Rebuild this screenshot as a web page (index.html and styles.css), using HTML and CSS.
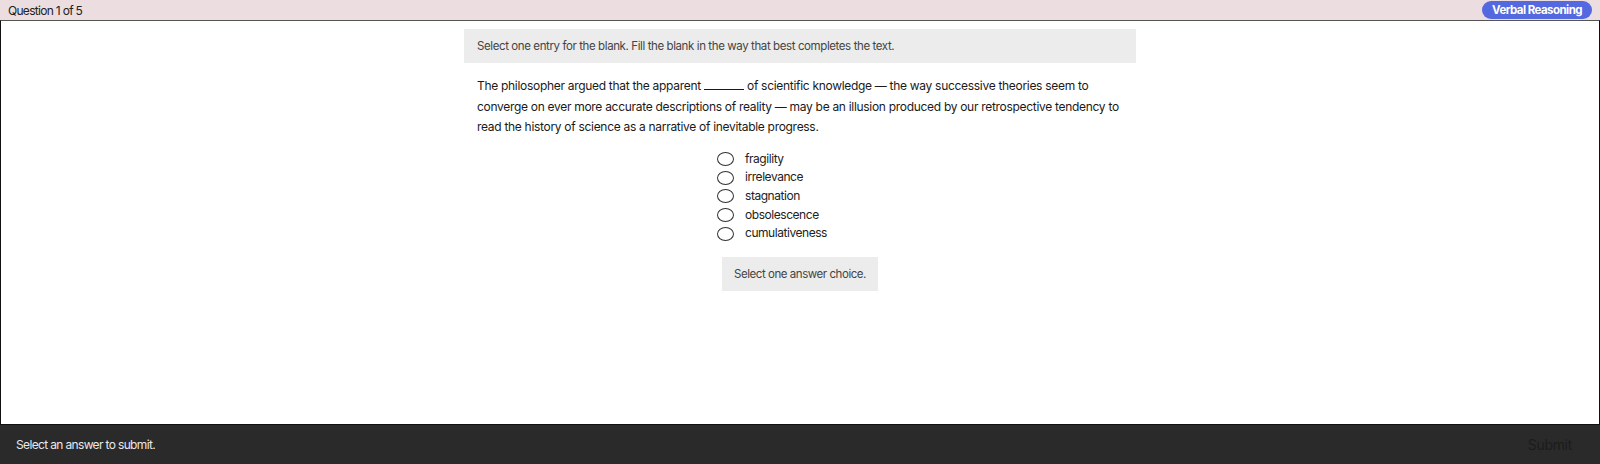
FILE: index.html
```html
<!DOCTYPE html>
<html lang="en">
<head>
  <meta charset="UTF-8">
  <meta name="viewport" content="width=device-width, initial-scale=1.0">
  <title>Question 1 of 5</title>
  <link rel="stylesheet" href="styles.css">
</head>
<body>

  <div class="top-bar">
    <span class="progress">Question 1 of 5</span>
    <span class="badge">Verbal Reasoning</span>
  </div>

  <div class="main">
    <div class="question">
      <div class="instructions">Select one entry for the blank. Fill the blank in the way that best completes the text.</div>

      <p class="passage">The philosopher argued that the apparent <span class="blank"></span> of scientific knowledge — the way successive theories seem to converge on ever more accurate descriptions of reality — may be an illusion produced by our retrospective tendency to read the history of science as a narrative of inevitable progress.</p>

      <!-- 답안 선택지 -->
      <ul class="choices">
        <li class="choice"><span class="radio"></span>fragility</li>
        <li class="choice"><span class="radio"></span>irrelevance</li>
        <li class="choice"><span class="radio"></span>stagnation</li>
        <li class="choice"><span class="radio"></span>obsolescence</li>
        <li class="choice"><span class="radio"></span>cumulativeness</li>
      </ul>

      <div class="hint">Select one answer choice.</div>
    </div>
  </div>

  <div class="footer">
    <span class="status">Select an answer to submit.</span>
    <button class="submit" disabled>Submit</button>
  </div>

</body>
</html>
```

FILE: styles.css
```css
html, body {
  height: 100%;
}

body {
  margin: 0;
  font-family: Inter, "Noto Sans", Arial, sans-serif;
  color: #1f1f1f;
  display: flex;
  flex-direction: column;
  overflow: hidden;
}

/* 상단 바 */
.top-bar {
  height: 20px;
  flex-shrink: 0;
  background-color: #ecdde0;
  display: flex;
  align-items: center;
  justify-content: space-between;
  padding: 0 8px;
  font-size: 12px;
}

.progress {
  color: #222;
  letter-spacing: -0.7px;
}

.badge {
  background-color: #5468e0;
  color: #fff;
  font-weight: 700;
  font-size: 11.5px;
  letter-spacing: -0.55px;
  padding: 2px 10px;
  border-radius: 10px;
  line-height: 14px;
}

/* 문제 영역 */
.main {
  flex: 1;
  border: 1px solid #111;
  border-top: 1px solid #555;
  background: #fff;
}

.question {
  max-width: 672px;
  margin: 8px auto 0;
}

.instructions {
  background-color: #ececec;
  color: #444;
  font-size: 11.5px;
  letter-spacing: -0.4px;
  line-height: 14px;
  padding: 10px 13px;
}

.passage {
  margin: 13px 0 0;
  padding: 0 13px;
  font-size: 12px;
  letter-spacing: -0.3px;
  line-height: 20.5px;
  color: #1a1a1a;
}

.blank {
  display: inline-block;
  width: 40px;
  border-bottom: 1px solid #1a1a1a;
  vertical-align: baseline;
}

.choices {
  list-style: none;
  width: 166px;
  margin: 12px auto 0;
  padding: 0;
}

.choice {
  display: flex;
  align-items: center;
  font-size: 12px;
  letter-spacing: -0.45px;
  line-height: 18.7px;
  color: #222;
}

.radio {
  width: 15px;
  height: 12px;
  border: 1.5px solid #333;
  border-radius: 50%;
  margin-right: 11px;
  flex-shrink: 0;
}

.hint {
  width: fit-content;
  margin: 14px auto 0;
  background-color: #ececec;
  color: #444;
  font-size: 11.5px;
  letter-spacing: -0.45px;
  line-height: 14px;
  padding: 10px 12px;
}

/* 하단 바 */
.footer {
  height: 39px;
  flex-shrink: 0;
  background-color: #2a2a2a;
  display: flex;
  align-items: center;
  justify-content: space-between;
  padding: 0 16px;
}

.status {
  color: #e8e8e8;
  font-size: 12px;
  letter-spacing: -0.65px;
}

.submit {
  background: none;
  border: none;
  color: #1c1c1c;
  font-family: inherit;
  font-size: 14px;
  letter-spacing: -0.3px;
  padding: 0 12px;
}
```
